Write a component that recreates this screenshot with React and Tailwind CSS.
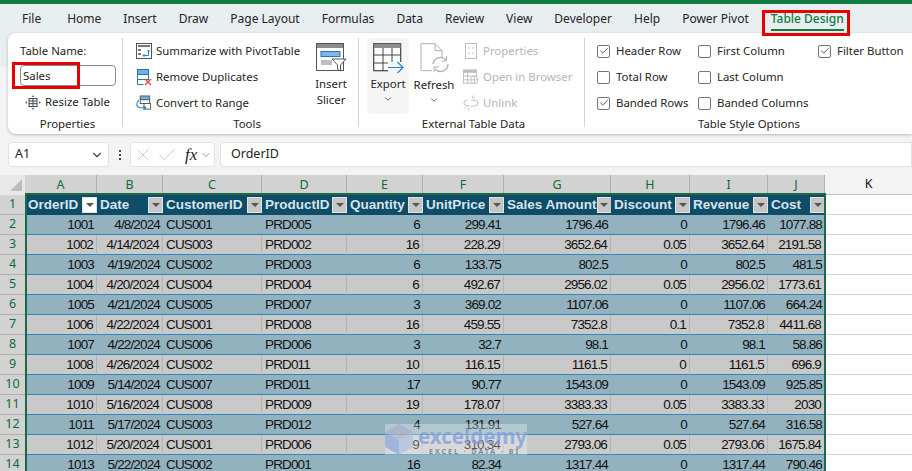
import React from 'react';
import { ChevronDown, X, Check } from 'lucide-react';

const tabs = ['Home', 'Insert', 'Draw', 'Page Layout', 'Formulas', 'Data', 'Review', 'View', 'Developer', 'Help', 'Power Pivot'];

const columns = ['A', 'B', 'C', 'D', 'E', 'F', 'G', 'H', 'I', 'J'];

const headers = ['OrderID', 'Date', 'CustomerID', 'ProductID', 'Quantity', 'UnitPrice', 'Sales Amount', 'Discount', 'Revenue', 'Cost'];

const rows = [
  ['1001', '4/8/2024', 'CUS001', 'PRD005', '6', '299.41', '1796.46', '0', '1796.46', '1077.88'],
  ['1002', '4/14/2024', 'CUS003', 'PRD002', '16', '228.29', '3652.64', '0.05', '3652.64', '2191.58'],
  ['1003', '4/19/2024', 'CUS002', 'PRD003', '6', '133.75', '802.5', '0', '802.5', '481.5'],
  ['1004', '4/20/2024', 'CUS004', 'PRD004', '6', '492.67', '2956.02', '0.05', '2956.02', '1773.61'],
  ['1005', '4/21/2024', 'CUS005', 'PRD007', '3', '369.02', '1107.06', '0', '1107.06', '664.24'],
  ['1006', '4/22/2024', 'CUS001', 'PRD008', '16', '459.55', '7352.8', '0.1', '7352.8', '4411.68'],
  ['1007', '4/22/2024', 'CUS006', 'PRD006', '3', '32.7', '98.1', '0', '98.1', '58.86'],
  ['1008', '4/26/2024', 'CUS002', 'PRD011', '10', '116.15', '1161.5', '0', '1161.5', '696.9'],
  ['1009', '5/14/2024', 'CUS007', 'PRD011', '17', '90.77', '1543.09', '0', '1543.09', '925.85'],
  ['1010', '5/16/2024', 'CUS008', 'PRD009', '19', '178.07', '3383.33', '0.05', '3383.33', '2030'],
  ['1011', '5/17/2024', 'CUS003', 'PRD012', '4', '131.91', '527.64', '0', '527.64', '316.58'],
  ['1012', '5/20/2024', 'CUS001', 'PRD006', '9', '310.34', '2793.06', '0.05', '2793.06', '1675.84'],
  ['1013', '5/22/2024', 'CUS002', 'PRD001', '16', '82.34', '1317.44', '0', '1317.44', '790.46'],
];

const PivotIcon = () => (
  <svg width="16" height="16" viewBox="0 0 16 16" fill="none">
    <rect x="0.5" y="0.5" width="15" height="15" fill="#fff" stroke="#555" />
    <rect x="2" y="2" width="12" height="2" fill="#777" />
    <rect x="2" y="6" width="3" height="2" fill="#777" />
    <rect x="2" y="10" width="3" height="2" fill="#777" />
    <path d="M7 12.500h5.500V7M11 8.500l1.500-1.500 1.500 1.500M8.500 11l-1.500 1.500 1.500 1.500" stroke="#1e88d2" />
  </svg>
);

const DuplicatesIcon = () => (
  <svg width="15" height="17" viewBox="0 0 15 17" fill="none">
    <rect x="0.500" y="0.500" width="11" height="5" fill="#6fb1e4" stroke="#2a73b0" />
    <rect x="0.500" y="5.500" width="11" height="5" fill="#fff" stroke="#2a73b0" />
    <path d="M0.500 10.500v5h6" stroke="#2a73b0" />
    <path d="M8 10l6 6M14 10l-6 6" stroke="#e04a3a" strokeWidth="1.400" />
  </svg>
);

const ConvertIcon = () => (
  <svg width="17" height="17" viewBox="0 0 17 17" fill="none">
    <rect x="4.500" y="0.500" width="10" height="4" fill="#6fb1e4" stroke="#555" />
    <rect x="4.500" y="4.500" width="10" height="4" fill="#fff" stroke="#555" />
    <rect x="8.500" y="8.500" width="7" height="6" fill="#fff" stroke="#555" />
    <path d="M3 5C0 8 0 12 4 13h6M8 11l2.500 2L8 15" stroke="#1e88d2" strokeWidth="1.200" />
  </svg>
);

const ResizeIcon = () => (
  <svg width="16" height="15" viewBox="0 0 16 15" fill="none">
    <rect x="4" y="3.500" width="8" height="8" stroke="#444" />
    <path d="M4 6h8M4 8.700h8M8 3.500v8" stroke="#444" />
    <path d="M8 0l1.500 2h-3zM8 15l-1.500-2h3zM0 7.500l2-1.500v3zM16 7.500l-2 1.500v-3z" fill="#1e88d2" />
  </svg>
);

const SlicerIcon = () => (
  <svg width="31" height="30" viewBox="0 0 31 30" fill="none">
    <rect x="0.500" y="0.500" width="27" height="27" fill="#fff" stroke="#555" />
    <rect x="1" y="1" width="26" height="4" fill="#8c8c8c" />
    <rect x="5" y="8.500" width="19" height="5" fill="#7db8e8" stroke="#2a73b0" />
    <rect x="5" y="17" width="11" height="5" fill="#bdbdbd" />
    <path d="M16 16h14l-5.500 6v6l-3-1.500V22z" fill="#fff" stroke="#555" />
  </svg>
);

const ExportIcon = () => (
  <svg width="31" height="31" viewBox="0 0 31 31" fill="none">
    <rect x="0.700" y="0.700" width="27" height="27" fill="#fff" stroke="#444" strokeWidth="1.200" />
    <rect x="1" y="1" width="26.500" height="4" fill="#8c8c8c" />
    <path d="M1 12h27M1 20h27M10 5v23M19 5v23" stroke="#444" />
    <rect x="15" y="19" width="16" height="12" fill="#f5f5f5" />
    <path d="M15 24.500h15M24.500 19l5.500 5.500-5.500 5.500" stroke="#1e88d2" strokeWidth="1.200" />
  </svg>
);

const RefreshIcon = () => (
  <svg width="29" height="30" viewBox="0 0 29 30" fill="none">
    <path d="M1 0.700h14l7 7v8M1 0.700v27h11M15 0.700v7h7" stroke="#b0b0b0" fill="#fff" />
    <path d="M13 21a7.500 7.500 0 0 1 13-4M28 21a7.500 7.500 0 0 1-13 5" stroke="#b0b0b0" strokeWidth="1.300" />
    <path d="M26.500 13v5h-5M14 29v-5h5" stroke="#b0b0b0" />
  </svg>
);

const PropertiesIcon = () => (
  <svg width="12" height="16" viewBox="0 0 12 16" fill="none" stroke="#bdbdbd">
    <rect x="0.500" y="0.500" width="11" height="15" />
    <path d="M3 5h2M3 10h2M7 5h2M7 10h2" />
  </svg>
);

const BrowserIcon = () => (
  <svg width="17" height="16" viewBox="0 0 17 16" fill="none" stroke="#bdbdbd">
    <rect x="0.500" y="0.500" width="14" height="14" />
    <rect x="1" y="1" width="13" height="2" fill="#bdbdbd" />
    <path d="M1 7h13M1 11h6M5 3v12" />
    <circle cx="12" cy="11" r="4" fill="#fff" />
    <path d="M8 11h8M12 7v8" />
  </svg>
);

const UnlinkIcon = () => (
  <svg width="17" height="16" viewBox="0 0 17 16" fill="none" stroke="#bdbdbd">
    <path d="M5 5H4a3 3 0 0 0 0 6h3M9 5h4a3 3 0 0 1 0 6h-1a3 3 0 0 1-4 0" />
    <path d="M10 0v3M13 1l-2 2M3 12l-2 2M6 13v3" />
  </svg>
);

const Checkbox = ({ label, checked }) => (
  <div className="h-[26px] flex items-center gap-[6px]">
    <span className="w-[13px] h-[13px] rounded-[2px] border border-[#757575] bg-white flex items-center justify-center">
      {checked && <Check className="w-[10px] h-[10px] text-[#333]" strokeWidth={2} />}
    </span>
    <span className="whitespace-nowrap">{label}</span>
  </div>
);

const ToolRow = ({ icon, label, disabled }) => (
  <div className={`h-[26px] flex items-center gap-[4px] whitespace-nowrap ${disabled ? 'text-[#b4b4b4]' : ''}`}>
    <span className="w-[16px] flex justify-center">{icon}</span>
    {label}
  </div>
);

const Group = ({ label, className, children }) => (
  <div className={`flex flex-col shrink-0 border-r border-[#d4d4d4] mt-[5px] mb-[7px] ${className}`}>
    <div className="h-[76px] flex">{children}</div>
    <div className="text-center mt-[2px] leading-[15px]">{label}</div>
  </div>
);

const FilterButton = ({ active }) => (
  <span className={`w-[15px] h-[16px] shrink-0 flex items-center justify-center border border-[#e2e2e2] ${active ? 'bg-white' : 'bg-[#c6c6c6]'}`}>
    <span className="w-0 h-0 border-x-[4px] border-x-transparent border-t-[4px] border-t-[#555]" />
  </span>
);

const App = () => {
  return (
    <div className="relative w-[912px] h-[471px] overflow-hidden bg-[#f3f3f3] text-[#242424] text-[11.4px] font-['Noto_Sans',sans-serif]">
      <div className="h-[4px] bg-[#107c41]" />

      {/* Tabs */}
      <div className="h-[63px] -mb-[34px] bg-[#e8eef0]">
        <div className="h-[29px] flex items-center pl-[22px] gap-[22px] text-[12px] whitespace-nowrap">
          <span className="mr-[4px]">File</span>
          {tabs.map((t) => <span key={t}>{t}</span>)}
          <span className="relative text-[#107c41] font-medium">
            Table Design
            <span className="absolute left-0 right-0 bottom-[-3px] h-[2px] bg-[#107c41]" />
          </span>
        </div>
      </div>

      {/* Ribbon */}
      <div className="relative ml-[8px] h-[101px] bg-white rounded-l-[8px] shadow-[0_1px_3px_rgba(0,0,0,0.25)] flex">
        <Group label="Properties" className="w-[115px] pl-[12px] pr-[7px]">
          <div className="w-full">
            <div className="h-[21px] leading-[26px]">Table Name:</div>
            <div className="h-[21px] mt-[6px] w-[96px] border border-[#8a8a8a] rounded-[4px] pl-[2px] leading-[19px]">Sales</div>
            <div className="h-[26px] mt-[3px] pl-[5px] flex items-center gap-[4px]">
              <ResizeIcon />
              Resize Table
            </div>
          </div>
        </Group>

        <Group label="Tools" className="w-[236px] pl-[13px]">
          <div className="w-[175px]">
            <ToolRow icon={<PivotIcon />} label="Summarize with PivotTable" />
            <ToolRow icon={<DuplicatesIcon />} label="Remove Duplicates" />
            <ToolRow icon={<ConvertIcon />} label="Convert to Range" />
          </div>
          <div className="w-[40px] flex flex-col items-center pt-[5px] leading-[16px]">
            <SlicerIcon />
            <div className="mt-[3px] text-center">Insert<br />Slicer</div>
          </div>
        </Group>

        <Group label="External Table Data" className="w-[226px] pl-[8px] pr-[4px]">
          <div className="w-[42px] h-[76px] bg-[#f5f5f5] rounded-[4px] flex flex-col items-center pt-[5px]">
            <ExportIcon />
            <div className="mt-[2px] leading-[16px]">Export</div>
            <ChevronDown className="w-[10px] h-[10px] mt-[2px] text-[#444]" />
          </div>
          <div className="w-[46px] ml-[2px] flex flex-col items-center pt-[5px]">
            <RefreshIcon />
            <div className="mt-[4px] leading-[16px]">Refresh</div>
            <ChevronDown className="w-[10px] h-[10px] mt-[2px] text-[#444]" />
          </div>
          <div className="ml-[6px]">
            <ToolRow disabled icon={<PropertiesIcon />} label="Properties" />
            <ToolRow disabled icon={<BrowserIcon />} label="Open in Browser" />
            <ToolRow disabled icon={<UnlinkIcon />} label="Unlink" />
          </div>
        </Group>

        <div className="flex flex-col flex-1 mt-[5px] mb-[7px] pl-[12px]">
          <div className="h-[76px] flex">
            <div className="w-[101px]">
              <Checkbox checked label="Header Row" />
              <Checkbox label="Total Row" />
              <Checkbox checked label="Banded Rows" />
            </div>
            <div className="w-[120px]">
              <Checkbox label="First Column" />
              <Checkbox label="Last Column" />
              <Checkbox label="Banded Columns" />
            </div>
            <Checkbox checked label="Filter Button" />
          </div>
          <div className="mt-[2px] leading-[15px] pl-[101px]">Table Style Options</div>
        </div>
      </div>

      {/* Formula bar */}
      <div className="h-[41px] pt-[8px] pl-[8px] flex gap-[5px] text-[12.5px]">
        <div className="w-[101px] h-[25px] bg-white rounded-[4px] border border-[#e2e2e2] flex items-center justify-between pl-[6px] pr-[4px]">
          A1
          <ChevronDown className="w-[14px] h-[14px] text-[#444]" />
        </div>
        <div className="w-[11px] flex flex-col items-center justify-center gap-[2px] h-[25px]">
          <span className="w-[2px] h-[2px] bg-[#444]" />
          <span className="w-[2px] h-[2px] bg-[#444]" />
          <span className="w-[2px] h-[2px] bg-[#444]" />
        </div>
        <div className="w-[85px] h-[25px] bg-white rounded-[4px] border border-[#e2e2e2] flex items-center pl-[2px] gap-[3px]">
          <X className="w-[20px] h-[20px] shrink-0 text-[#c4c4c4]" strokeWidth={1} />
          <Check className="w-[22px] h-[22px] shrink-0 text-[#c4c4c4]" strokeWidth={1} />
          <span className="font-['Liberation_Serif',serif] italic text-[17px] ml-[4px] leading-none">fx</span>
          <ChevronDown className="w-[12px] h-[12px] shrink-0 text-[#999]" />
        </div>
        <div className="flex-1 h-[25px] bg-white rounded-l-[4px] border border-[#e2e2e2] flex items-center pl-[10px]">OrderID</div>
      </div>

      {/* Sheet */}
      <div className="grid grid-cols-[25px_72px_66px_99px_85px_76px_81px_107px_79px_78px_57px_87px] auto-rows-[20px] text-[13.5px] font-['Liberation_Sans',sans-serif] text-[#111] bg-white">
        <div className="bg-[#e8e8e8] flex items-end justify-end pr-[3px] pb-[4px]">
          <span className="w-0 h-0 border-l-[12px] border-l-transparent border-b-[12px] border-b-[#bdbdbd]" />
        </div>
        {columns.map((c) => (
          <div key={c} className="bg-[#d2d2d2] border-r border-[#b0b0b0] flex items-center justify-center text-[12.5px] text-[#0f6b3a] font-['Noto_Sans',sans-serif]">{c}</div>
        ))}
        <div className="bg-[#f3f3f3] border-b border-[#c0c0c0] flex items-center justify-center text-[12.5px] font-['Noto_Sans',sans-serif]">K</div>

        <div className="bg-[#d2d2d2] border-b border-[#b0b0b0] flex items-center justify-center text-[12.5px] text-[#0f6b3a] font-['Noto_Sans',sans-serif]">1</div>
        {headers.map((h, i) => (
          <div key={h} className="bg-[#0f4c68] text-[#d5e4ec] font-bold flex items-center justify-between pl-[3px] whitespace-nowrap overflow-hidden">
            {h}
            <FilterButton active={i === 0} />
          </div>
        ))}
        <div className="border-b border-[#d4d4d4]" />

        {rows.map((row, r) => (
          <React.Fragment key={row[0]}>
            <div className="bg-[#d2d2d2] border-b border-[#b0b0b0] flex items-center justify-center text-[12.5px] text-[#0f6b3a] font-['Noto_Sans',sans-serif]">{r + 2}</div>
            {row.map((cell, i) => (
              <div
                key={i}
                className={`border-b border-b-[#2a8bba] flex items-center px-[3px] pt-[1px] whitespace-nowrap tracking-[-0.85px] ${r % 2 === 0 ? 'bg-[#93b2bf]' : 'bg-[#c9c9c9] border-r border-r-[#b4b4b4]'} ${i === 2 || i === 3 ? 'justify-start' : 'justify-end'}`}
              >
                {cell}
              </div>
            ))}
            <div className="border-b border-[#d4d4d4]" />
          </React.Fragment>
        ))}
      </div>

      {/* Table outline */}
      <div className="absolute left-[25px] top-[193px] w-[801px] h-[291px] border-2 border-[#1a6b45] pointer-events-none" />

      {/* Red callouts */}
      <div className="absolute left-[12px] top-[62px] w-[68px] h-[27px] border-[3px] border-[#e60000] pointer-events-none" />
      <div className="absolute left-[762px] top-[10px] w-[88px] h-[26px] border-[3px] border-[#e60000] pointer-events-none" />

      {/* Watermark */}
      <div className="absolute left-[385px] top-[424px] w-[142px] h-[31px] bg-white/30 flex items-center pointer-events-none">
        <svg width="28" height="31" viewBox="0 0 28 31" className="opacity-60 shrink-0">
          <path d="M14 0l14 8-14 8L0 8z" fill="#a9a9c4" />
          <path d="M0 8l14 8v15L0 23z" fill="#7f9ddb" />
          <path d="M28 8v15l-14 8V16z" fill="#a4bce4" />
        </svg>
        <div className="relative ml-[5px] h-[31px] font-['Noto_Sans',sans-serif]">
          <div className="text-[20.5px] font-bold text-[#7e9cdc]/75 leading-[24px]">exceldemy</div>
          <div className="text-[7px] font-bold tracking-[2px] text-[#7d8a94] leading-[8px] pl-[11px] whitespace-nowrap">EXCEL · DATA · BI</div>
        </div>
      </div>
    </div>
  );
};

export default App;
